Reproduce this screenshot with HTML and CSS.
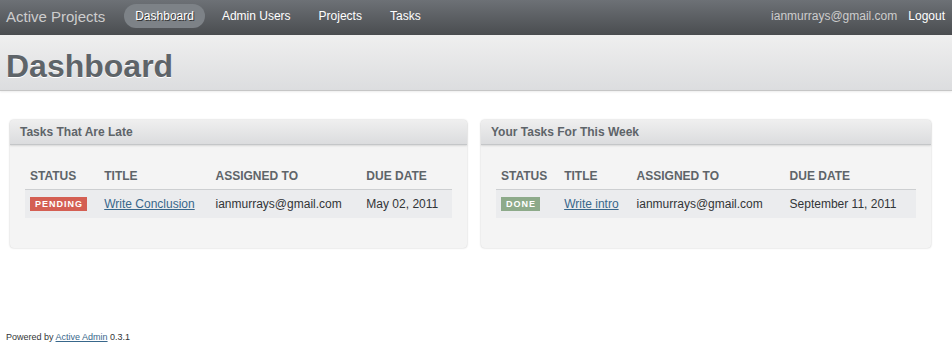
FILE: index.html
```html
<!DOCTYPE html>
<html lang="en">
<head>
    <meta charset="UTF-8">
    <title>Dashboard | Active Projects</title>
    <link rel="stylesheet" href="styles.css">
</head>
<body>
    <div id="header">
        <h1 class="site-title">Active Projects</h1>
        <ul class="tabs">
            <li class="current"><a href="#">Dashboard</a></li>
            <li><a href="#">Admin Users</a></li>
            <li><a href="#">Projects</a></li>
            <li><a href="#">Tasks</a></li>
        </ul>
        <p class="utility-nav">
            <span class="current-user">ianmurrays@gmail.com</span>
            <a href="#">Logout</a>
        </p>
    </div>

    <div id="title-bar">
        <h2 id="page-title">Dashboard</h2>
    </div>

    <div id="content">
        <div class="columns">
            <div class="panel">
                <h3>Tasks That Are Late</h3>
                <div class="panel-contents">
                    <table class="index-table">
                        <thead>
                            <tr>
                                <th>Status</th>
                                <th>Title</th>
                                <th>Assigned To</th>
                                <th>Due Date</th>
                            </tr>
                        </thead>
                        <tbody>
                            <tr>
                                <td><span class="status pending">Pending</span></td>
                                <td><a href="#">Write Conclusion</a></td>
                                <td>ianmurrays@gmail.com</td>
                                <td>May 02, 2011</td>
                            </tr>
                        </tbody>
                    </table>
                </div>
            </div>

            <div class="panel">
                <h3>Your Tasks For This Week</h3>
                <div class="panel-contents">
                    <table class="index-table">
                        <thead>
                            <tr>
                                <th>Status</th>
                                <th>Title</th>
                                <th>Assigned To</th>
                                <th>Due Date</th>
                            </tr>
                        </thead>
                        <tbody>
                            <tr>
                                <td><span class="status done">Done</span></td>
                                <td><a href="#">Write intro</a></td>
                                <td>ianmurrays@gmail.com</td>
                                <td>September 11, 2011</td>
                            </tr>
                        </tbody>
                    </table>
                </div>
            </div>
        </div>
    </div>

    <div id="footer">
        <p>Powered by <a href="#">Active Admin</a> 0.3.1</p>
    </div>
</body>
</html>
```

FILE: styles.css
```css
body {
    margin: 0;
    padding: 0;
    font-family: "Liberation Sans", Arial, sans-serif;
    font-size: 12px;
    color: #323537;
    background-color: #ffffff;
}

a {
    color: #38678b;
}

/* top navigation */
#header {
    display: flex;
    align-items: center;
    height: 35px;
    padding: 0 7px 0 6px;
    background: linear-gradient(to bottom, #6d7176, #4a4d50);
    box-sizing: border-box;
}

.site-title {
    margin: -2px 19px 0 0;
    font-size: 15px;
    font-weight: normal;
    color: #cdcdcd;
    line-height: 20px;
}

.tabs {
    display: flex;
    gap: 6px;
    list-style: none;
    margin: -3px 0 0 0;
    padding: 0;
}

.tabs a {
    display: block;
    padding: 0 11px;
    height: 24px;
    line-height: 24px;
    border-radius: 12px;
    color: #ffffff;
    text-decoration: none;
    font-size: 12px;
}

.tabs .current a {
    background-color: #7d8287;
    text-shadow: 1px 1px 0 #333;
}

.utility-nav {
    margin: -3px 0 0 auto;
    display: flex;
    gap: 11px;
    font-size: 12px;
}

.current-user {
    color: #cdcdcd;
}

.utility-nav a {
    color: #ffffff;
    text-decoration: none;
}

/* title bar */
#title-bar {
    height: 55px;
    padding: 0 6px;
    background: linear-gradient(to bottom, #efefef, #dcdddf);
    border-bottom: 1px solid #c6c6c6;
    box-shadow: 0 1px 2px rgba(0, 0, 0, 0.08);
}

#page-title {
    margin: 0;
    padding-top: 13px;
    font-size: 32px;
    line-height: 36px;
    font-weight: bold;
    color: #5e6469;
    text-shadow: 0 1px 0 #ffffff;
}

/* panels */
#content {
    padding: 29px 0 0 10px;
}

.columns {
    display: grid;
    grid-template-columns: 457px 450px;
    gap: 14px;
}

.panel {
    background-color: #f4f4f4;
    border-radius: 4px;
    box-shadow: 0 0 2px rgba(0, 0, 0, 0.25);
}

.panel h3 {
    margin: 0;
    height: 24px;
    line-height: 24px;
    padding: 0 10px;
    font-size: 12px;
    font-weight: bold;
    color: #5e6469;
    background: linear-gradient(to bottom, #efefef, #dbdcde);
    border-bottom: 1px solid #c4c6c8;
    border-radius: 4px 4px 0 0;
    box-shadow: 0 1px 2px rgba(0, 0, 0, 0.12);
}

.panel-contents {
    padding: 15px 15px 30px;
}

.index-table {
    width: 100%;
    border-collapse: collapse;
}

.index-table th {
    text-align: left;
    text-transform: uppercase;
    font-size: 12px;
    font-weight: bold;
    color: #5e6469;
    line-height: 14px;
    padding: 9px 5px 6px;
    border-bottom: 1px solid #cdcfd1;
}

.index-table td {
    line-height: 13px;
    padding: 7px 5px;
    background-color: #ebecee;
    white-space: nowrap;
}

.status {
    display: inline-block;
    padding: 1px 4px 1px 5px;
    font-size: 9px;
    line-height: 12px;
    font-weight: bold;
    letter-spacing: 1px;
    text-transform: uppercase;
    color: #ffffff;
    vertical-align: middle;
}

.pending {
    background-color: #d45f53;
}

.done {
    background-color: #8daa8a;
}

/* footer */
#footer {
    padding: 83px 6px 0;
}

#footer p {
    margin: 0;
    font-size: 9px;
    line-height: 12px;
    color: #323537;
}
```
